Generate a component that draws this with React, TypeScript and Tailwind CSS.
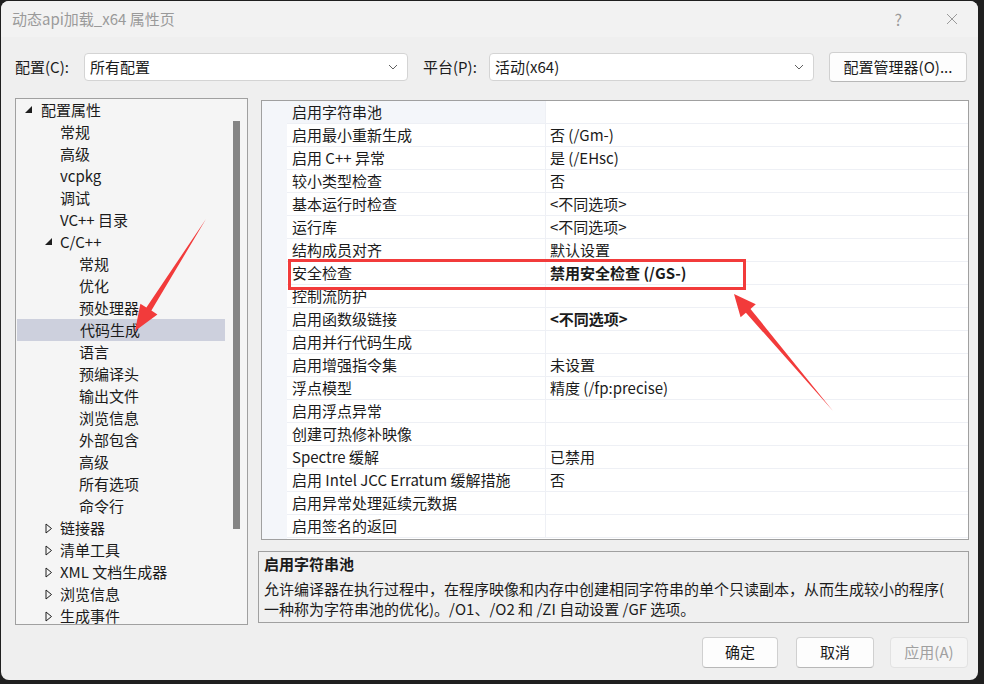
import React from 'react';

type TreeItem = { level: number; text: string; tri?: 'open' | 'closed'; selected?: boolean };

const tree: TreeItem[] = [
  { level: 0, text: '配置属性', tri: 'open' },
  { level: 1, text: '常规' },
  { level: 1, text: '高级' },
  { level: 1, text: 'vcpkg' },
  { level: 1, text: '调试' },
  { level: 1, text: 'VC++ 目录' },
  { level: 1, text: 'C/C++', tri: 'open' },
  { level: 2, text: '常规' },
  { level: 2, text: '优化' },
  { level: 2, text: '预处理器' },
  { level: 2, text: '代码生成', selected: true },
  { level: 2, text: '语言' },
  { level: 2, text: '预编译头' },
  { level: 2, text: '输出文件' },
  { level: 2, text: '浏览信息' },
  { level: 2, text: '外部包含' },
  { level: 2, text: '高级' },
  { level: 2, text: '所有选项' },
  { level: 2, text: '命令行' },
  { level: 1, text: '链接器', tri: 'closed' },
  { level: 1, text: '清单工具', tri: 'closed' },
  { level: 1, text: 'XML 文档生成器', tri: 'closed' },
  { level: 1, text: '浏览信息', tri: 'closed' },
  { level: 1, text: '生成事件', tri: 'closed' },
];

const levelPad = ['pl-[9px]', 'pl-[28px]', 'pl-[47px]'];

const props: [string, string, boolean?][] = [
  ['启用字符串池', ''],
  ['启用最小重新生成', '否 (/Gm-)'],
  ['启用 C++ 异常', '是 (/EHsc)'],
  ['较小类型检查', '否'],
  ['基本运行时检查', '<不同选项>'],
  ['运行库', '<不同选项>'],
  ['结构成员对齐', '默认设置'],
  ['安全检查', '禁用安全检查 (/GS-)', true],
  ['控制流防护', ''],
  ['启用函数级链接', '<不同选项>', true],
  ['启用并行代码生成', ''],
  ['启用增强指令集', '未设置'],
  ['浮点模型', '精度 (/fp:precise)'],
  ['启用浮点异常', ''],
  ['创建可热修补映像', ''],
  ['Spectre 缓解', '已禁用'],
  ['启用 Intel JCC Erratum 缓解措施', '否'],
  ['启用异常处理延续元数据', ''],
  ['启用签名的返回', ''],
];

function Chevron() {
  return (
    <svg width="10" height="6" viewBox="0 0 10 6" className="shrink-0">
      <polyline points="1,1 5,5 9,1" fill="none" stroke="#606060" strokeWidth="1" />
    </svg>
  );
}

function Combo({ text, width }: { text: string; width: string }) {
  return (
    <div className={`${width} h-[28px] flex items-center justify-between bg-white border border-[#d4d4d4] rounded-[4px] pl-[5px] pr-[9px]`}>
      <span>{text}</span>
      <Chevron />
    </div>
  );
}

export default function App() {
  return (
    <div className="relative w-[984px] h-[684px] bg-[#1f1f1f] overflow-hidden font-['Noto_Sans_CJK_SC',sans-serif] text-[15px] text-[#1b1b1b]">
      <div className="ml-[1px] mt-[1px] w-[977px] h-[679px] rounded-[8px] bg-[#efefef] flex flex-col">
        {/* title bar */}
        <div className="h-[36px] flex items-center pl-[11px] pr-[20px] text-[#9a9a9a] rounded-t-[8px] bg-[#f2f2f2]">
          <span className="leading-[20px]">动态api加载_x64 属性页</span>
          <span className="ml-auto text-[16px] mr-[44px]">?</span>
          <svg width="12" height="12" viewBox="0 0 12 12">
            <path d="M1 1 L11 11 M11 1 L1 11" stroke="#9a9a9a" strokeWidth="1" />
          </svg>
        </div>

        {/* config row */}
        <div className="mt-[15px] h-[30px] flex items-center pl-[14px]">
          <span className="w-[69px]">配置(C):</span>
          <Combo text="所有配置" width="w-[324px]" />
          <span className="ml-[15px] w-[66px]">平台(P):</span>
          <Combo text="活动(x64)" width="w-[325px]" />
          <button className="ml-[15px] w-[138px] h-[30px] bg-[#fdfdfd] border border-[#d0d0d0] border-b-[#b8b8b8] rounded-[4px] text-[15px]">
            配置管理器(O)...
          </button>
        </div>

        {/* main */}
        <div className="mt-[16px] h-[527px] flex pl-[14px]">
          {/* tree */}
          <div className="w-[233px] h-full border border-[#a0a0a0] bg-[#f5f5f5] flex overflow-hidden">
            <div className="w-[209px] flex flex-col">
              {tree.map((it, i) => (
                <div
                  key={i}
                  className={`h-[22px] shrink-0 flex items-center whitespace-nowrap ${levelPad[it.level]} ${it.selected ? 'bg-[#cdd0dd] ml-[1px]' : ''}`}
                >
                  <div className="w-[16px] flex items-center">
                    {it.tri === 'open' && (
                      <svg width="8" height="8" viewBox="0 0 8 8" className={it.level === 1 ? 'ml-[1px]' : ''}>
                        <polygon points="7,0 7,7 0,7" fill="#1e1e1e" />
                      </svg>
                    )}
                    {it.tri === 'closed' && (
                      <svg width="8" height="11" viewBox="0 0 8 11" className="ml-[1px]">
                        <polygon points="1,1 6.5,5.5 1,10" fill="none" stroke="#1e1e1e" strokeWidth="1" />
                      </svg>
                    )}
                  </div>
                  <span className="leading-[22px]">{it.text}</span>
                </div>
              ))}
            </div>
            <div className="flex-1 pl-[8px] pt-[22px]">
              <div className="w-[7px] h-[408px] bg-[#858585]" />
            </div>
          </div>

          {/* right column */}
          <div className="ml-[10px] w-[711px] h-full flex flex-col">
            <div className="ml-[3px] mt-[2px] w-[708px] h-[440px] border border-[#a0a0a0] bg-white flex overflow-hidden">
              <div className="w-[25px] h-full bg-[#f4f6fa]" />
              <div className="flex-1 flex flex-col">
                {props.map(([name, value, bold], i) => (
                  <div key={i} className="h-[23px] shrink-0 flex border-b border-[#eef0f5]">
                    <div className={`w-[259px] h-full pl-[5px] flex items-center whitespace-nowrap border-r border-[#eef0f5] ${i === 0 ? 'bg-[#f4f6fa]' : ''}`}>
                      {name}
                    </div>
                    <div className={`flex-1 h-full pl-[4px] flex items-center whitespace-nowrap ${bold ? 'font-bold' : ''}`}>
                      {value}
                    </div>
                  </div>
                ))}
              </div>
            </div>

            <div className="mt-[11px] h-[72px] border border-[#a0a0a0] bg-[#f0f0f0] pl-[5px] pt-[1px]">
              <div className="h-[22px] leading-[22px] font-bold">启用字符串池</div>
              <div className="mt-[4px] leading-[20px] whitespace-nowrap">
                允许编译器在执行过程中，在程序映像和内存中创建相同字符串的单个只读副本，从而生成较小的程序(
                <br />
                一种称为字符串池的优化)。/O1、/O2 和 /ZI 自动设置 /GF 选项。
              </div>
            </div>
          </div>
        </div>

        {/* buttons */}
        <div className="mt-[12px] h-[31px] flex justify-end pr-[10px]">
          <button className="w-[76px] h-full bg-[#fdfdfd] border border-[#d0d0d0] border-b-[#b8b8b8] rounded-[4px]">确定</button>
          <button className="ml-[18px] w-[78px] h-full bg-[#fdfdfd] border border-[#d0d0d0] border-b-[#b8b8b8] rounded-[4px]">取消</button>
          <button className="ml-[16px] w-[78px] h-full bg-[#f5f5f5] border border-[#e2e2e2] rounded-[4px] text-[#a0a0a0]">应用(A)</button>
        </div>
      </div>

      {/* annotations */}
      <svg className="absolute inset-0 pointer-events-none" width="984" height="684" viewBox="0 0 984 684">
        <rect x="289.5" y="260.5" width="455" height="28" fill="none" stroke="#f23b3b" strokeWidth="3" />
        <polygon
          points="206,219 151.4,310.6 157.4,314.4 135,331 140.4,303.7 146.4,307.4"
          fill="#f23b3b"
        />
        <polygon
          points="833,411 750.5,308.9 755.8,304.3 734,294 740.6,317.3 745.9,312.7"
          fill="#f23b3b"
        />
      </svg>
    </div>
  );
}
